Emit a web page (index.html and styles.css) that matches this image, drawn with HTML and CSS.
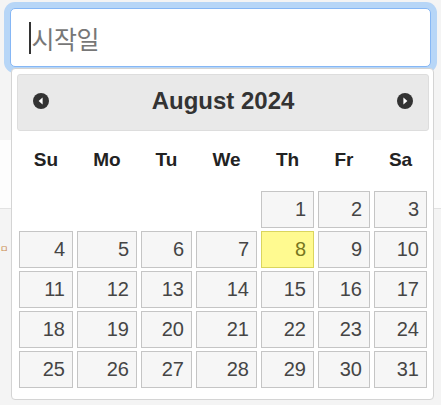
FILE: index.html
```html
<!DOCTYPE html>
<html lang="ko">
<head>
<meta charset="utf-8">
<link rel="stylesheet" href="styles.css">
</head>
<body>
<div class="page">
  <div class="band"></div>
  <div class="side-glyph">ㅁ</div>
</div>
<div class="field">
  <span class="caret"></span><span class="placeholder">시작일</span>
</div>
<div class="datepicker">
  <div class="dp-header">
    <span class="nav prev"><svg width="16" height="16" viewBox="0 0 16 16"><circle cx="8" cy="8" r="8" fill="#333"/><path d="M9.6 4.6 L5.6 8 L9.6 11.4 Z" fill="#fff"/></svg></span>
    <span class="dp-title">August 2024</span>
    <span class="nav next"><svg width="16" height="16" viewBox="0 0 16 16"><circle cx="8" cy="8" r="8" fill="#333"/><path d="M6.4 4.6 L10.4 8 L6.4 11.4 Z" fill="#fff"/></svg></span>
  </div>
  <div class="dp-grid">
    <div class="dow">Su</div><div class="dow">Mo</div><div class="dow">Tu</div><div class="dow">We</div><div class="dow">Th</div><div class="dow">Fr</div><div class="dow">Sa</div>
    <div class="empty"></div><div class="empty"></div><div class="empty"></div><div class="empty"></div>
    <div class="day">1</div><div class="day">2</div><div class="day">3</div>
    <div class="day">4</div><div class="day">5</div><div class="day">6</div><div class="day">7</div><div class="day today">8</div><div class="day">9</div><div class="day">10</div>
    <div class="day">11</div><div class="day">12</div><div class="day">13</div><div class="day">14</div><div class="day">15</div><div class="day">16</div><div class="day">17</div>
    <div class="day">18</div><div class="day">19</div><div class="day">20</div><div class="day">21</div><div class="day">22</div><div class="day">23</div><div class="day">24</div>
    <div class="day">25</div><div class="day">26</div><div class="day">27</div><div class="day">28</div><div class="day">29</div><div class="day">30</div><div class="day">31</div>
  </div>
</div>
</body>
</html>
```
FILE: styles.css
```css
html, body {
  margin: 0;
  padding: 0;
}
body {
  background: #f4f4f4;
  width: 441px;
  height: 405px;
  overflow: hidden;
  font-family: "Liberation Sans", Arial, sans-serif;
  position: relative;
}
.page {
  padding-top: 140px;
}
.band {
  height: 68px;
  background: #fdfdfd;
  border-bottom: 1px solid #e2e2e2;
}
.side-glyph {
  position: absolute;
  left: 0;
  top: 243px;
  font-family: "Noto Sans CJK KR", sans-serif;
  font-size: 9px;
  line-height: 12px;
  color: #c9884a;
}
.field {
  position: absolute;
  left: 10px;
  top: 8px;
  width: 421px;
  height: 59px;
  box-sizing: border-box;
  background: #fff;
  border: 1px solid #86b7f5;
  border-radius: 5px;
  box-shadow: 0 0 0 6px rgba(0, 123, 255, 0.25);
  display: flex;
  align-items: center;
  padding-left: 18px;
}
.caret {
  width: 1.5px;
  height: 32px;
  background: #333;
  margin-right: 1px;
}
.placeholder {
  font-family: "Noto Sans CJK KR", sans-serif;
  font-size: 25px;
  color: #777;
  letter-spacing: -0.5px;
}
.datepicker {
  position: absolute;
  left: 11px;
  top: 68px;
  width: 423px;
  height: 332px;
  box-sizing: border-box;
  background: #fff;
  border: 1px solid #d4d4d4;
  border-radius: 4px;
  padding: 5px 4px 0 5px;
}
.dp-header {
  height: 57px;
  box-sizing: border-box;
  background: #e9e9e9;
  border: 1px solid #dddddd;
  border-radius: 3px;
  display: flex;
  align-items: center;
  justify-content: space-between;
  padding: 0 15px 3px 15px;
}
.nav {
  display: flex;
  width: 16px;
  height: 16px;
}
.dp-title {
  font-weight: bold;
  font-size: 24px;
  color: #333;
}
.dp-grid {
  display: grid;
  grid-template-columns: 54px 60px 51px 61px 53px 52px 53px;
  grid-template-rows: 57px repeat(5, 37px);
  column-gap: 4px;
  row-gap: 3px;
  margin-left: 2px;
}
.dow {
  font-weight: bold;
  font-size: 19px;
  color: #222;
  display: flex;
  align-items: center;
  justify-content: center;
}
.day {
  box-sizing: border-box;
  background: #f6f6f6;
  border: 1px solid #c5c5c5;
  color: #454545;
  font-size: 20px;
  display: flex;
  align-items: center;
  justify-content: flex-end;
  padding-right: 7px;
}
.day.today {
  background: #fffa90;
  border-color: #dad55e;
  color: #777620;
}
```
